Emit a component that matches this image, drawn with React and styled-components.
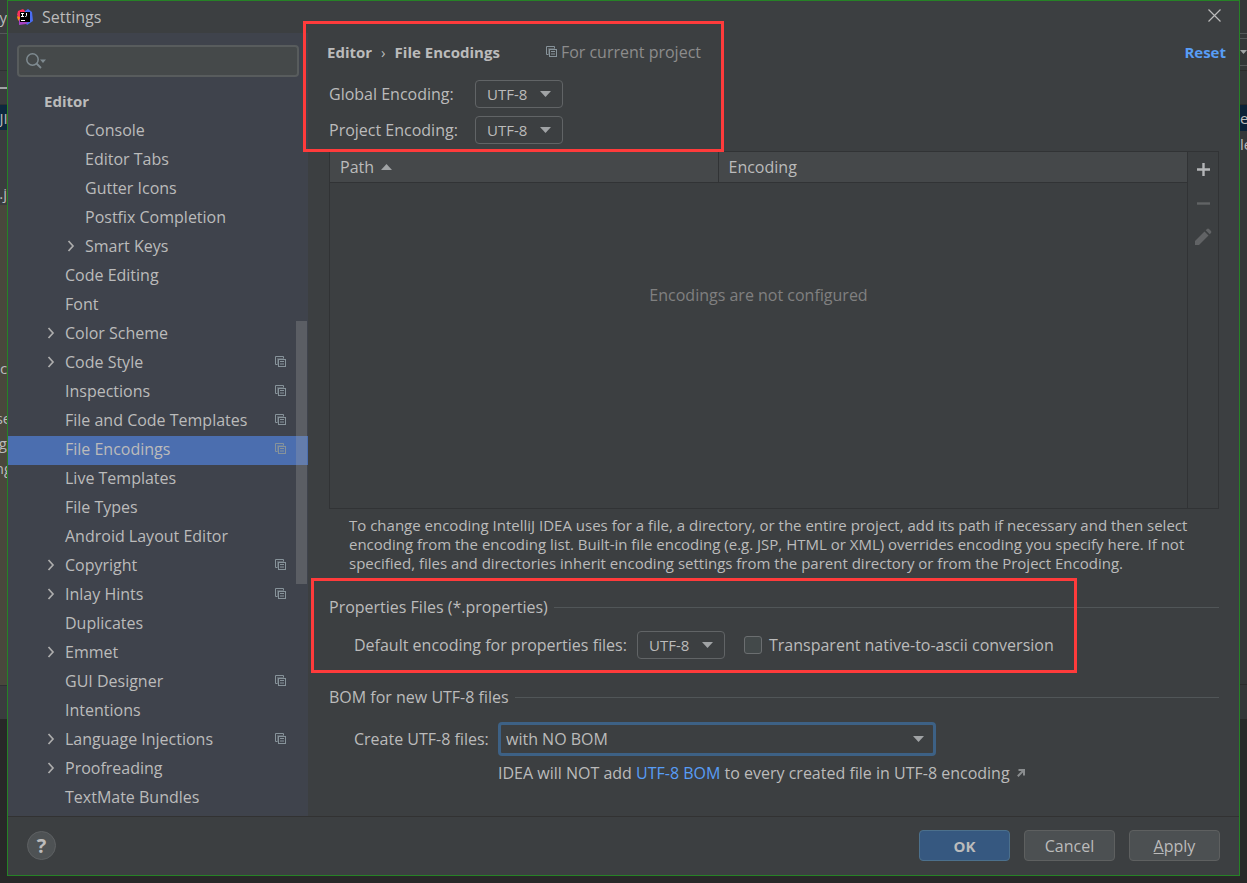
// src/App.jsx
import React, { useState } from "react";
import styled, { createGlobalStyle } from "styled-components";

const GlobalStyle = createGlobalStyle`
  * {
    box-sizing: border-box;
  }

  body {
    margin: 0;
    background-color: #282828;
    color: #bbbbbb;
    font-family: "Open Sans", "Noto Sans", sans-serif;
    font-size: 16px;
    line-height: 20px;
  }

  button,
  input,
  select {
    font: inherit;
    color: inherit;
  }
`;

const Desktop = styled.div`
  display: grid;
  grid-template-columns: 7px minmax(0, 1fr) 7px;
  min-height: 100vh;
`;

/* Slivers of the IDE window that stay visible beside the dialog */
const Strip = styled.div`
  display: flex;
  flex-direction: column;
  overflow: hidden;
  font-size: 15px;
`;

const StripBlock = styled.div`
  display: flex;
  align-items: center;
  justify-content: ${({ $align }) => $align || "center"};
  flex: none;
  height: ${({ $height }) => $height}px;
  background-color: ${({ $color }) => $color || "#3a3c3e"};
  border-bottom: ${({ $line }) => ($line ? `1px solid ${$line}` : "none")};
  overflow: hidden;
  white-space: nowrap;
`;

const Dialog = styled.div`
  position: relative;
  display: flex;
  flex-direction: column;
  margin-bottom: 7px;
  border: 1px solid #268226;
  background-color: #3c3f41;
`;

const TitleBar = styled.header`
  display: flex;
  align-items: center;
  gap: 9px;
  height: 32px;
  padding: 0 18px 0 9px;

  h1 {
    flex: 1;
    margin: 0;
    font-size: 16px;
    font-weight: 400;
  }
`;

const IconButton = styled.button`
  display: flex;
  align-items: center;
  justify-content: center;
  padding: 0;
  border: none;
  background: none;
  color: ${({ disabled }) => (disabled ? "#616365" : "#b4b6b8")};
`;

const CloseButton = styled(IconButton)`
  padding-bottom: 4px;
`;

const Body = styled.div`
  display: grid;
  grid-template-columns: 300px minmax(0, 1fr);
  flex: 1;
`;

const Sidebar = styled.nav`
  position: relative;
  padding: 12px 0 3px;
  background-color: #3f434c;
`;

const SearchBox = styled.label`
  display: flex;
  align-items: center;
  gap: 6px;
  height: 32px;
  margin: 0 9px 11px;
  padding: 0 7px;
  border: 2px solid #585c5d;
  border-radius: 4px;
  background-color: #45494a;

  input {
    flex: 1;
    min-width: 0;
    border: none;
    outline: none;
    background: none;
  }
`;

const Tree = styled.ul`
  margin: 0;
  padding: 0;
  list-style: none;
`;

const TreeRow = styled.button`
  display: flex;
  align-items: center;
  width: 100%;
  height: 29px;
  padding: 0 22px 4px ${({ $level }) => 16 + $level * 20}px;
  border: none;
  background-color: ${({ $selected }) => ($selected ? "#4b6eaf" : "transparent")};
  font-size: ${({ $level }) => ($level === 0 ? 15 : 16)}px;
  font-weight: ${({ $level }) => ($level === 0 ? 700 : 400)};
  text-align: left;
`;

const TreeArrow = styled.span`
  display: flex;
  flex: none;
  width: ${({ $level }) => ($level === 0 ? 20 : 21)}px;
  padding-left: 3px;
`;

const TreeLabel = styled.span`
  flex: 1;
  white-space: nowrap;
`;

const ScrollThumb = styled.div`
  position: absolute;
  top: 288px;
  right: 1px;
  width: 11px;
  height: 263px;
  background-color: rgba(166, 166, 166, 0.28);
`;

const Main = styled.main`
  display: flex;
  flex-direction: column;
  padding: 0 20px 0 21px;
`;

const PageHeader = styled.div`
  display: flex;
  align-items: center;
  height: 39px;
  margin-left: -2px;
  padding-bottom: 2px;
`;

const Breadcrumb = styled.h2`
  display: flex;
  align-items: center;
  gap: 9px;
  margin: 0 46px 0 0;
  font-size: 15px;
  font-weight: 700;

  span:nth-child(2) {
    font-weight: 400;
  }
`;

const ProjectHint = styled.span`
  display: flex;
  align-items: center;
  gap: 4px;
  color: #8c8c8c;
`;

const ResetLink = styled.a`
  margin-left: auto;
  margin-right: -7px;
  color: #589df6;
  font-size: 15px;
  font-weight: 700;
  text-decoration: none;
`;

const EncodingGrid = styled.div`
  display: grid;
  grid-template-columns: 146px auto;
  justify-content: start;
  align-items: center;
  row-gap: 8px;
  padding: 8px 0 7px;
`;

const SelectWrap = styled.div`
  position: relative;
  width: ${({ $wide }) => ($wide ? "438px" : "88px")};

  select {
    display: block;
    width: 100%;
    height: ${({ $wide }) => ($wide ? 34 : 28)}px;
    padding: 0 ${({ $wide }) => ($wide ? "24px 0 5px" : "24px 0 11px")};
    border: ${({ $wide }) => ($wide ? "3px solid #3d6185" : "1px solid #616466")};
    border-radius: 4px;
    outline: none;
    background-color: #3c3f41;
    font-size: ${({ $wide }) => ($wide ? 16 : 15)}px;
    appearance: none;
  }

  svg {
    position: absolute;
    top: 50%;
    right: 12px;
    margin-top: -3px;
    pointer-events: none;
  }
`;

const TablePanel = styled.div`
  display: grid;
  grid-template-columns: minmax(0, 1fr) 30px;
  height: 358px;
  border: 1px solid #313335;
`;

const TableArea = styled.div`
  display: flex;
  flex-direction: column;
  border-right: 1px solid #313335;
`;

const EncodingTable = styled.table`
  width: 100%;
  border-collapse: collapse;
  table-layout: fixed;

  th {
    height: 30px;
    padding: 0 10px;
    border-bottom: 1px solid #313335;
    background-color: #45484a;
    font-weight: 400;
    text-align: left;
  }

  th:first-child {
    width: 388px;
    border-right: 1px solid #313335;
  }

  svg {
    margin-left: 7px;
    vertical-align: 3px;
  }
`;

const EmptyText = styled.p`
  margin: 102px 0 0;
  color: #808080;
  text-align: center;
`;

const TableTools = styled.div`
  display: flex;
  flex-direction: column;
  align-items: center;
  gap: 14px;
  padding-top: 7px;

  button {
    width: 20px;
    height: 20px;
  }
`;

const Description = styled.p`
  margin: 7px 0 0;
  padding-left: 20px;
  font-size: 15px;
  line-height: 19px;
`;

const SectionTitle = styled.h3`
  display: flex;
  align-items: center;
  gap: 6px;
  margin: 0;
  font-size: 16px;
  font-weight: 400;
  white-space: nowrap;

  &::after {
    content: "";
    flex: 1;
    height: 1px;
    background-color: #515658;
  }
`;

const Section = styled.section`
  margin-top: 24px;
`;

const FormRow = styled.div`
  display: flex;
  align-items: center;
  margin: 14px 0 28px;
  padding-left: 25px;

  label {
    white-space: nowrap;
  }
`;

const BomRow = styled.div`
  display: grid;
  grid-template-columns: 144px minmax(0, 1fr);
  align-items: center;
  row-gap: 7px;
  margin-top: 15px;
  padding-left: 25px;
`;

const PropertiesLabel = styled.label`
  width: 283px;
`;

const CheckLabel = styled.label`
  display: flex;
  align-items: center;
  gap: 7px;
  margin-left: 19px;

  input {
    width: 18px;
    height: 18px;
    margin: 0;
    border: 1px solid #6b6e70;
    border-radius: 3px;
    background-color: #43494a;
    appearance: none;
  }

  input:checked {
    background-color: #4b6eaf;
  }
`;

const BomHint = styled.p`
  grid-column: 2;
  margin: 0;

  a {
    color: #589df6;
    text-decoration: none;
  }

  svg {
    margin-left: 7px;
    vertical-align: 2px;
  }
`;

const Footer = styled.footer`
  display: flex;
  align-items: center;
  gap: 14px;
  height: 59px;
  padding: 0 19px 1px;
  border-top: 1px solid #323232;
`;

const HelpButton = styled.button`
  width: 29px;
  height: 29px;
  margin-right: auto;
  padding: 0;
  border: 1px solid #5e6163;
  border-radius: 50%;
  background-color: #4e5254;
  font-size: 20px;
  font-weight: 700;
  line-height: 27px;
`;

const ActionButton = styled.button`
  width: 91px;
  height: 31px;
  padding: 0;
  border: 1px solid ${({ $primary }) => ($primary ? "#4c708c" : "#5e6060")};
  border-radius: 4px;
  background-color: ${({ $primary }) => ($primary ? "#365880" : "#4c5052")};
  font-size: ${({ $primary }) => ($primary ? 15 : 16)}px;
  font-weight: ${({ $primary }) => ($primary ? 700 : 400)};
`;

/* Red marker frames drawn on top of the dialog */
const Marker = styled.div`
  position: absolute;
  top: ${({ $top }) => $top}px;
  left: ${({ $left }) => $left}px;
  width: ${({ $width }) => $width}px;
  height: ${({ $height }) => $height}px;
  border: 3px solid #ff3b3b;
  pointer-events: none;
`;

const AppLogo = () => (
  <svg width="16" height="16" viewBox="0 0 16 16">
    <path d="M0 8 2 5 5 9 3 13 1 11z" fill="#fc8a1a" />
    <path d="M1 2 6 0 9 3 5 9 2 8 0 6z" fill="#fe315d" />
    <path d="M8 2 11 0 15 3 16 12 10 16 7 12z" fill="#4a6cf0" />
    <path d="M2 10 6 11 11 13 9 15 2 16z" fill="#a742c4" />
    <rect x="3" y="3" width="10" height="10" fill="#000000" />
    <path d="M4 4.500h3M5.500 4.500v3M4 7.500h3M9.500 4v2.500q0 1-1 1H8" fill="none" stroke="#ffffff" />
    <path d="M4 11.500h4" stroke="#ffffff" />
  </svg>
);

const CopyIcon = () => (
  <svg width="11" height="11" viewBox="0 0 11 11" fill="none" stroke="#87939a">
    <path d="M2.500 8.500h-2v-8h8v2" />
    <path d="M2.500 8.500v-6h6" opacity="0.45" />
    <rect x="3.500" y="3.500" width="7" height="7" />
    <path d="M5 5.500h4M5 8h4" />
  </svg>
);

const ChevronIcon = () => (
  <svg width="8" height="12" viewBox="0 0 8 12">
    <path d="M1.500 1 6 6 1.500 11" fill="none" stroke="#adadad" strokeWidth="1.700" />
  </svg>
);

const TriangleIcon = ({ up }) => (
  <svg width="11" height="6" viewBox="0 0 11 6">
    <path d={up ? "M0 6h11L5.500 0z" : "M0 0h11L5.500 6z"} fill="#a0a3a5" />
  </svg>
);

const SearchIcon = () => (
  <svg width="21" height="16" viewBox="0 0 21 16">
    <circle cx="6.500" cy="6.500" r="5.700" fill="none" stroke="#7f8b91" strokeWidth="1.500" />
    <path d="M10.500 10.500 15 15" stroke="#7f8b91" strokeWidth="1.800" />
    <path d="M14 6.500h6L17 10z" fill="#7f8b91" />
  </svg>
);

const CloseIcon = () => (
  <svg width="13" height="13" viewBox="0 0 13 13">
    <path d="M.5.5l12 12M12.500.5l-12 12" stroke="#bbbbbb" strokeWidth="1.200" />
  </svg>
);

const PencilIcon = () => (
  <svg width="18" height="18" viewBox="0 0 18 18" fill="currentColor">
    <path d="M1 17v-4L10.500 3.500l4 4L5 17z" />
    <path d="M11.700 2.300 13 1q1-.8 2 0l2 2q.8 1 0 2l-1.300 1.300z" />
  </svg>
);

const ExternalIcon = () => (
  <svg width="8" height="8" viewBox="0 0 8 8">
    <path d="M1.500 1h5.500v5.500M7 1 .8 7.200" fill="none" stroke="#8a8d8f" strokeWidth="2" />
  </svg>
);

const treeItems = [
  { label: "Editor", level: 0 },
  { label: "Console", level: 2 },
  { label: "Editor Tabs", level: 2 },
  { label: "Gutter Icons", level: 2 },
  { label: "Postfix Completion", level: 2 },
  { label: "Smart Keys", level: 2, arrow: true },
  { label: "Code Editing", level: 1 },
  { label: "Font", level: 1 },
  { label: "Color Scheme", level: 1, arrow: true },
  { label: "Code Style", level: 1, arrow: true, project: true },
  { label: "Inspections", level: 1, project: true },
  { label: "File and Code Templates", level: 1, project: true },
  { label: "File Encodings", level: 1, project: true },
  { label: "Live Templates", level: 1 },
  { label: "File Types", level: 1 },
  { label: "Android Layout Editor", level: 1 },
  { label: "Copyright", level: 1, arrow: true, project: true },
  { label: "Inlay Hints", level: 1, arrow: true, project: true },
  { label: "Duplicates", level: 1 },
  { label: "Emmet", level: 1, arrow: true },
  { label: "GUI Designer", level: 1, project: true },
  { label: "Intentions", level: 1 },
  { label: "Language Injections", level: 1, arrow: true, project: true },
  { label: "Proofreading", level: 1, arrow: true },
  { label: "TextMate Bundles", level: 1 },
];

const EncodingSelect = ({ id }) => (
  <SelectWrap>
    <select id={id} defaultValue="UTF-8">
      <option>UTF-8</option>
    </select>
    <TriangleIcon />
  </SelectWrap>
);

const LeftStrip = () => (
  <Strip>
    <StripBlock $height={34} $line="#55585a" $align="flex-end">y</StripBlock>
    <StripBlock $height={37} $line="#2f3133" />
    <StripBlock $height={16} />
    <StripBlock $height={2} $color="#a0a2a4" />
    <StripBlock $height={16} $line="#2f3133" />
    <StripBlock $height={25} $color="#0d293e">JI</StripBlock>
    <StripBlock $height={50} />
    <StripBlock $height={25} $align="flex-end">.j</StripBlock>
    <StripBlock $height={150} $color="#49473c" />
    <StripBlock $height={25} $color="#49473c" $align="flex-start">c</StripBlock>
    <StripBlock $height={25} $color="#49473c" />
    <StripBlock $height={25} $color="#49473c">se</StripBlock>
    <StripBlock $height={25} $color="#49473c" $align="flex-end">g</StripBlock>
    <StripBlock $height={25} $color="#49473c">ng</StripBlock>
    <StripBlock $height={206} $color="#49473c" $line="#2f3133" />
    <StripBlock $height={33} />
  </Strip>
);

const RightStrip = () => (
  <Strip>
    <StripBlock $height={34} $color="#343638" $line="#55585a" />
    <StripBlock $height={5} $color="#343638" $line="#55585a" />
    <StripBlock $height={27} $color="#343638" $line="#55585a" $align="flex-start">
      <TriangleIcon />
    </StripBlock>
    <StripBlock $height={5} $color="#343638" $line="#2b2b2b" />
    <StripBlock $height={34} $color="#343638" $line="#2b2b2b" />
    <StripBlock $height={26} $color="#0b2238" $align="flex-start">e</StripBlock>
    <StripBlock $height={25} $color="#343638" $align="flex-start">le</StripBlock>
    <StripBlock $height={529} $color="#343638" $line="#2b2b2b" />
    <StripBlock $height={34} $color="#343638" />
  </Strip>
);

const SettingsTree = () => {
  const [selected, setSelected] = useState("File Encodings");

  return (
    <Tree>
      {treeItems.map(({ label, level, arrow, project }) => (
        <li key={label}>
          <TreeRow
            type="button"
            $level={level}
            $selected={label === selected}
            onClick={() => setSelected(label)}
          >
            <TreeArrow $level={level}>{arrow && <ChevronIcon />}</TreeArrow>
            <TreeLabel>{label}</TreeLabel>
            {project && <CopyIcon />}
          </TreeRow>
        </li>
      ))}
    </Tree>
  );
};

const App = () => (
  <>
    <GlobalStyle />
    <Desktop>
      <LeftStrip />
      <Dialog role="dialog" aria-labelledby="title">
        <TitleBar>
          <AppLogo />
          <h1 id="title">Settings</h1>
          <CloseButton type="button" aria-label="Close">
            <CloseIcon />
          </CloseButton>
        </TitleBar>

        <Body>
          <Sidebar>
            <SearchBox>
              <SearchIcon />
              <input type="text" aria-label="Search settings" />
            </SearchBox>
            <SettingsTree />
            <ScrollThumb />
          </Sidebar>

          <Main>
            <PageHeader>
              <Breadcrumb>
                <span>Editor</span>
                <span>›</span>
                <span>File Encodings</span>
              </Breadcrumb>
              <ProjectHint>
                <CopyIcon />
                For current project
              </ProjectHint>
              <ResetLink href="#reset">Reset</ResetLink>
            </PageHeader>

            <EncodingGrid>
              <label htmlFor="global">Global Encoding:</label>
              <EncodingSelect id="global" />
              <label htmlFor="project">Project Encoding:</label>
              <EncodingSelect id="project" />
            </EncodingGrid>

            <TablePanel>
              <TableArea>
                <EncodingTable>
                  <thead>
                    <tr>
                      <th>
                        Path
                        <TriangleIcon up />
                      </th>
                      <th>Encoding</th>
                    </tr>
                  </thead>
                </EncodingTable>
                <EmptyText>Encodings are not configured</EmptyText>
              </TableArea>
              <TableTools>
                <IconButton type="button" aria-label="Add">
                  <svg width="13" height="13" viewBox="0 0 13 13">
                    <path d="M6.500 0v13M0 6.500h13" stroke="currentColor" strokeWidth="2.400" />
                  </svg>
                </IconButton>
                <IconButton type="button" aria-label="Remove" disabled>
                  <svg width="13" height="3" viewBox="0 0 13 3">
                    <path d="M0 1.500h13" stroke="currentColor" strokeWidth="2.400" />
                  </svg>
                </IconButton>
                <IconButton type="button" aria-label="Edit" disabled>
                  <PencilIcon />
                </IconButton>
              </TableTools>
            </TablePanel>

            <Description>
              To change encoding IntelliJ IDEA uses for a file, a directory, or the entire
              project, add its path if necessary and then select encoding from the encoding
              list. Built-in file encoding (e.g. JSP, HTML or XML) overrides encoding you
              specify here. If not specified, files and directories inherit encoding settings
              from the parent directory or from the Project Encoding.
            </Description>

            <Section>
              <SectionTitle>Properties Files (*.properties)</SectionTitle>
              <FormRow>
                <PropertiesLabel htmlFor="properties">
                  Default encoding for properties files:
                </PropertiesLabel>
                <EncodingSelect id="properties" />
                <CheckLabel>
                  <input type="checkbox" />
                  Transparent native-to-ascii conversion
                </CheckLabel>
              </FormRow>
            </Section>

            <section>
              <SectionTitle>BOM for new UTF-8 files</SectionTitle>
              <BomRow>
                <label htmlFor="bom">Create UTF-8 files:</label>
                <SelectWrap $wide>
                  <select id="bom" defaultValue="with NO BOM">
                    <option>with NO BOM</option>
                    <option>with BOM</option>
                  </select>
                  <TriangleIcon />
                </SelectWrap>
                <BomHint>
                  IDEA will NOT add <a href="#bom-help">UTF-8 BOM</a> to every created file in
                  UTF-8 encoding
                  <ExternalIcon />
                </BomHint>
              </BomRow>
            </section>
          </Main>
        </Body>

        <Footer>
          <HelpButton type="button" aria-label="Help">?</HelpButton>
          <ActionButton type="button" $primary>OK</ActionButton>
          <ActionButton type="button">Cancel</ActionButton>
          <ActionButton type="button">
            <u>A</u>pply
          </ActionButton>
        </Footer>

        <Marker $top={20} $left={295} $width={421} $height={131} />
        <Marker $top={577} $left={303} $width={766} $height={95} />
      </Dialog>
      <RightStrip />
    </Desktop>
  </>
);

export default App;
